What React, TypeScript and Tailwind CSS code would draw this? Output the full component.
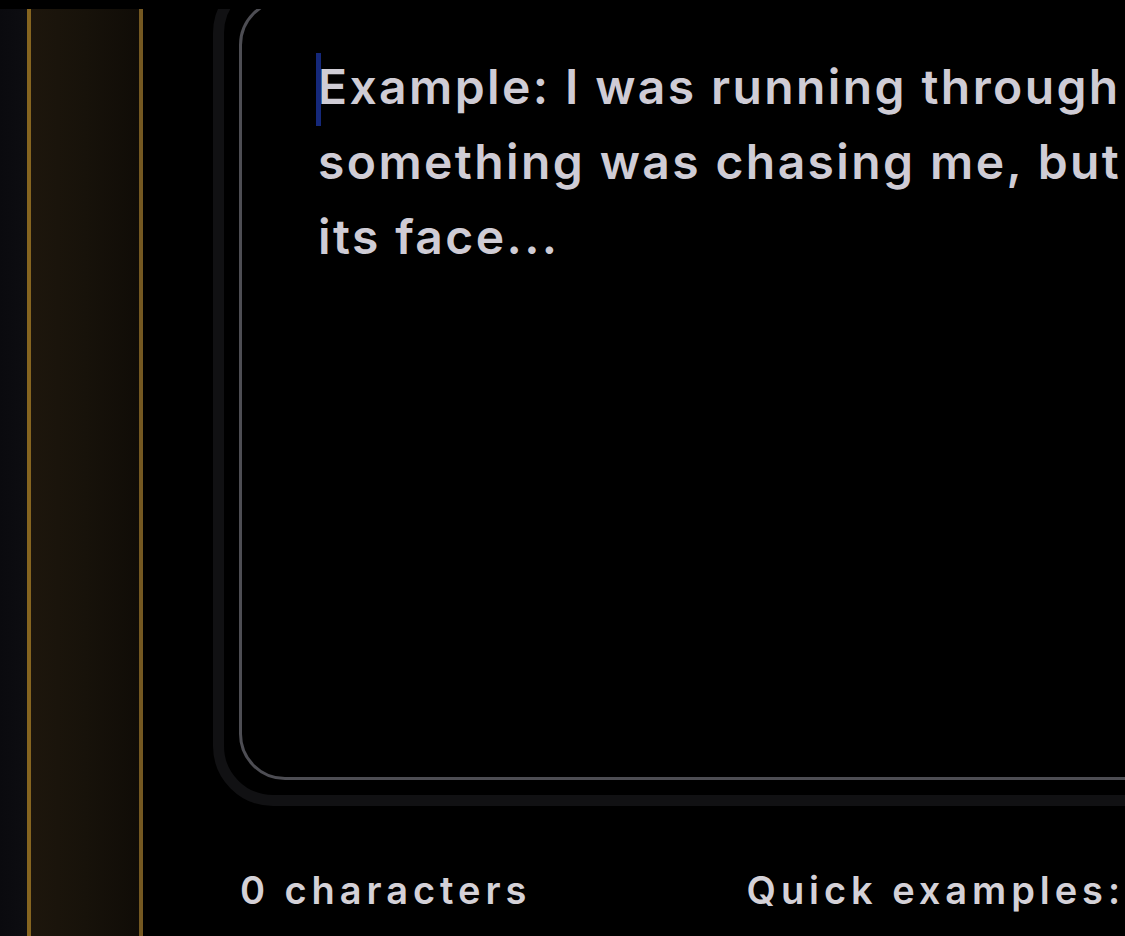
import { useState } from "react";

const PLACEHOLDER =
  "Example: I was running through a dark forest and\nsomething was chasing me, but I couldn't see\nits face...";

export default function App() {
  const [dream, setDream] = useState("");

  return (
    <div className="relative h-[936px] w-[1125px] overflow-hidden bg-black font-['Inter','Noto_Sans',sans-serif]">
      {/* top bar lying over the scrolled content */}
      <div className="absolute inset-x-0 top-0 z-10 h-[9px] bg-black" />

      <div className="flex h-full">
        <div className="w-[27px] shrink-0 bg-gradient-to-r from-[#0a0a0e] to-[#0d0d11]" />
        <div className="w-[116px] shrink-0 border-x-[4px] border-l-[#866520] border-r-[#745821] bg-gradient-to-r from-[#1d160c] via-[#17120a] to-[#100c07]" />

        <div className="ml-[70px] flex w-[1300px] shrink-0 flex-col">
          <div className="-mt-[27px] rounded-[60px] border-[11px] border-[#111113] p-[15px]">
            <div className="relative h-[781px] rounded-[46px] border-[3px] border-[#4d4d53] bg-black">
              <span className="absolute left-[74px] top-[51px] h-[73px] w-[5px] bg-[#15287a]" />
              <textarea
                value={dream}
                onChange={(e) => setDream(e.target.value)}
                placeholder={PLACEHOLDER}
                wrap="off"
                className="h-full w-full resize-none overflow-hidden bg-transparent pl-[76px] pr-6 pt-[47px] text-[48px] font-semibold leading-[75px] tracking-[0.05em] text-[#d2cfd7] placeholder:text-[#cfccd5] focus:outline-none"
              />
            </div>
          </div>

          <div className="ml-[27px] mt-[57px] flex w-[885px] items-center justify-between text-[38px] font-semibold leading-[54px] tracking-[0.13em] text-[#d4d1d7]">
            <span>{dream.length} characters</span>
            <span>Quick examples:</span>
          </div>
        </div>
      </div>
    </div>
  );
}
